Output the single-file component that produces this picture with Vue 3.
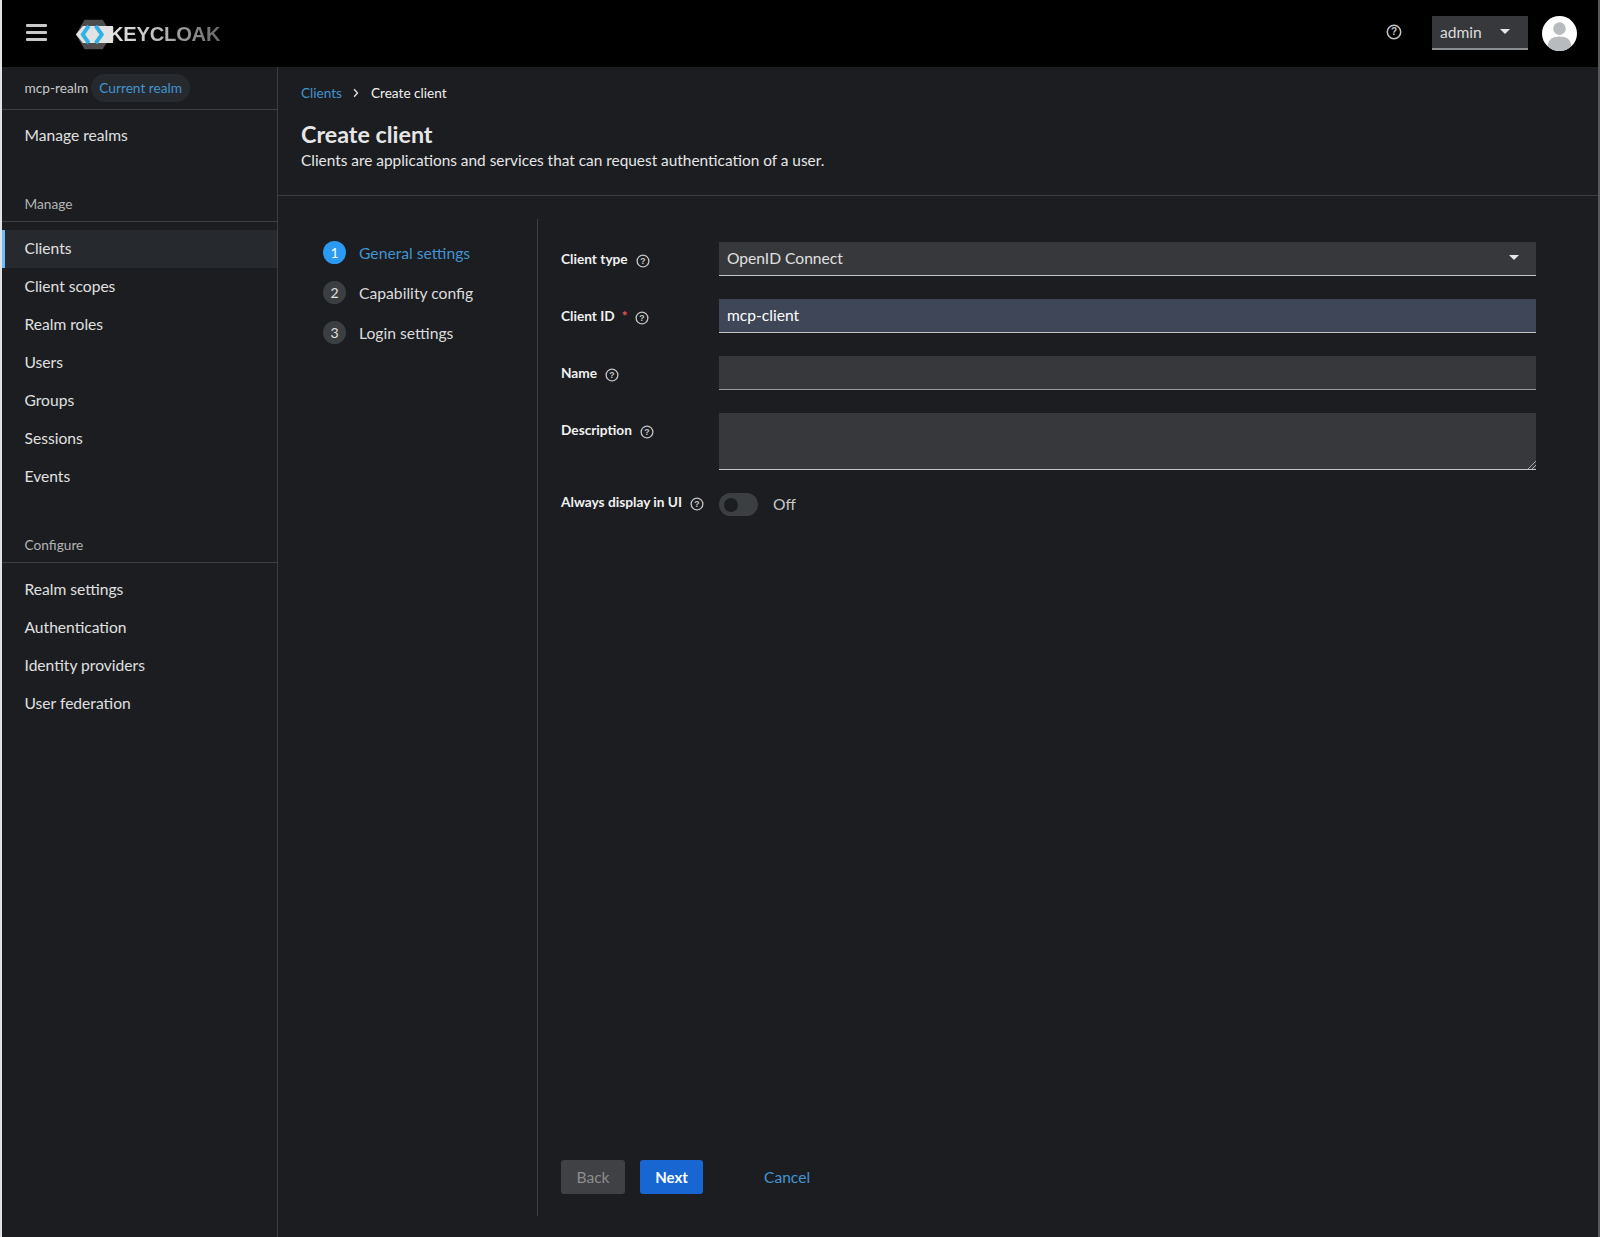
<script setup>
const manage = ['Clients', 'Client scopes', 'Realm roles', 'Users', 'Groups', 'Sessions', 'Events']
const configure = ['Realm settings', 'Authentication', 'Identity providers', 'User federation']
const steps = ['General settings', 'Capability config', 'Login settings']
</script>

<template>
  <div class="page">
    <header class="top">
      <div class="burger"><i></i><i></i><i></i></div>
      <div class="logo">
        <svg class="mark" viewBox="0 0 44 36" width="38" height="31">
          <path d="M11 1H32L43 18L32 35H11L1 18Z" fill="#4d4d4d" />
          <path d="M9 8H44V28H9L1 18Z" fill="#e2e2e2" />
          <path d="M16 8L9 18L16 28" fill="none" stroke="#2bb3e8" stroke-width="4.5" />
          <path d="M24 8L31 18L24 28" fill="none" stroke="#2bb3e8" stroke-width="4.5" />
        </svg>
        <span class="word">KEYCLOAK</span>
      </div>
      <div class="top-right">
        <svg class="help top-help" viewBox="0 0 16 16"><circle cx="8" cy="8" r="6.7" /><text x="8" y="11.4">?</text></svg>
        <div class="user"><span>admin</span><b class="caret"></b></div>
        <svg class="avatar" viewBox="0 0 36 36">
          <circle cx="18" cy="18" r="18" fill="#fff" />
          <circle cx="18" cy="13" r="6.5" fill="#b8bbbe" />
          <path d="M6 31C6 24 11 21 18 21C25 21 30 24 30 31C27 34 23 36 18 36C13 36 9 34 6 31Z" fill="#b8bbbe" />
        </svg>
      </div>
    </header>

    <div class="body">
      <aside class="side">
        <div class="realm"><span>mcp-realm</span><em>Current realm</em></div>
        <a class="nav first">Manage realms</a>
        <div class="section">Manage</div>
        <a v-for="(m, i) in manage" :key="m" class="nav" :class="{ active: i === 0 }">{{ m }}</a>
        <div class="section second">Configure</div>
        <a v-for="c in configure" :key="c" class="nav">{{ c }}</a>
      </aside>

      <main class="main">
        <section class="head">
          <div class="crumbs">
            <a>Clients</a>
            <svg viewBox="0 0 8 12" width="6" height="10"><path d="M1.5 1L6 6L1.5 11" fill="none" stroke="#e0e0e0" stroke-width="1.8" /></svg>
            <span>Create client</span>
          </div>
          <h1>Create client</h1>
          <p>Clients are applications and services that can request authentication of a user.</p>
        </section>

        <section class="wizard">
          <nav class="steps">
            <div v-for="(s, i) in steps" :key="s" class="step" :class="{ on: i === 0 }">
              <span class="num">{{ i + 1 }}</span><span>{{ s }}</span>
            </div>
          </nav>
          <div class="content">
            <form class="form">
              <label class="lab">Client type<svg class="help" viewBox="0 0 16 16"><circle cx="8" cy="8" r="6.7" /><text x="8" y="11.4">?</text></svg></label>
              <div class="field select">OpenID Connect<b class="caret"></b></div>

              <label class="lab">Client ID<span class="req">*</span><svg class="help" viewBox="0 0 16 16"><circle cx="8" cy="8" r="6.7" /><text x="8" y="11.4">?</text></svg></label>
              <div class="field filled">mcp-client</div>

              <label class="lab">Name<svg class="help" viewBox="0 0 16 16"><circle cx="8" cy="8" r="6.7" /><text x="8" y="11.4">?</text></svg></label>
              <div class="field dim"></div>

              <label class="lab">Description<svg class="help" viewBox="0 0 16 16"><circle cx="8" cy="8" r="6.7" /><text x="8" y="11.4">?</text></svg></label>
              <div class="field area">
                <svg class="grip" viewBox="0 0 8 8" width="8" height="8"><path d="M0 8L8 0M4 8L8 4" stroke="#a8a8a8" stroke-width="1" /></svg>
              </div>

              <label class="lab last">Always display in UI<svg class="help" viewBox="0 0 16 16"><circle cx="8" cy="8" r="6.7" /><text x="8" y="11.4">?</text></svg></label>
              <div class="switch"><span class="track"><i></i></span><span class="off">Off</span></div>
            </form>
            <div class="actions">
              <button type="button" class="btn back">Back</button>
              <button type="button" class="btn next">Next</button>
              <a class="cancel">Cancel</a>
            </div>
          </div>
        </section>
      </main>
    </div>
  </div>
</template>

<style>
html, body { margin: 0; background: #1b1d21; }
</style>

<style scoped>
.page {
  width: 1600px;
  height: 1237px;
  box-sizing: border-box;
  border-left: 2px solid #dfe3e6;
  border-right: 2px solid #55585c;
  display: flex;
  flex-direction: column;
  overflow: hidden;
  background: #1b1d21;
  color: #e0e0e0;
  font-family: "Lato", "Noto Sans", sans-serif;
  font-size: 15.6px;
}
.top {
  height: 67px;
  flex: none;
  background: #000;
  display: flex;
  align-items: center;
  padding: 0 21px 2px 24px;
  box-sizing: border-box;
}
.burger { display: flex; flex-direction: column; gap: 4px; width: 21px; margin-top: -1px; }
.burger i { height: 3px; background: #c9c9c9; border-radius: 1px; }
.logo { display: flex; align-items: center; margin: 4px 0 0 28px; }
.mark { display: block; }
.word {
  font-family: "Liberation Sans", sans-serif;
  font-weight: 700;
  font-size: 20.2px;
  margin-left: -4px;
  letter-spacing: -0.25px;
  background: linear-gradient(90deg, #e6e6e6 0%, #c2c2c2 40%, #666 100%);
  background-clip: text;
  -webkit-background-clip: text;
  color: transparent;
}
.top-right { margin-left: auto; display: flex; align-items: center; }
.help { width: 14px; height: 14px; flex: none; margin-top: 4px; }
.help circle { fill: none; stroke: #c4c4c4; stroke-width: 1.5; }
.help text { fill: #c4c4c4; font: 700 10px "Liberation Sans", sans-serif; text-anchor: middle; }
.top-help { width: 16px; height: 16px; margin: -2px 30px 0 0; }
.user {
  width: 96px;
  height: 34px;
  box-sizing: border-box;
  background: #36383c;
  border-bottom: 1px solid #8a8d90;
  display: flex;
  align-items: center;
  padding: 0 18px 1px 8px;
  justify-content: space-between;
  color: #dcdcdc;
  box-shadow: inset 0 -1px 0 #8a8d90;
}
.caret {
  width: 0;
  height: 0;
  border-left: 5px solid transparent;
  border-right: 5px solid transparent;
  border-top: 5px solid #e6e6e6;
}
.avatar { width: 35px; height: 35px; margin: 1px 0 0 14px; }

.body { flex: 1; display: flex; min-height: 0; }
.side {
  width: 276px;
  flex: none;
  box-sizing: border-box;
  background: #1b1d21;
  border-right: 1px solid #3c3f42;
}
.realm {
  height: 43px;
  box-sizing: border-box;
  border-bottom: 1px solid #3c3f42;
  display: flex;
  align-items: center;
  padding: 0 0 1px 22.5px;
  gap: 3px;
  font-size: 13.7px;
  color: #c8c8c8;
}
.realm em {
  font-style: normal;
  color: #4394d0;
  background: #26292d;
  border-radius: 14px;
  padding: 4px 8px;
  line-height: 20px;
}
.nav {
  display: flex;
  align-items: center;
  height: 38px;
  box-sizing: border-box;
  padding: 0 0 2px 22.5px;
  color: #e0e0e0;
}
.nav.first { margin-top: 7px; }
.nav.active {
  background: #26292d;
  box-shadow: inset 3px 0 0 #73bcf7;
  margin-top: 8px;
}
.section {
  margin-top: 36px;
  height: 31px;
  box-sizing: border-box;
  border-bottom: 1px solid #3c3f42;
  padding-left: 22.5px;
  font-size: 13.7px;
  color: #b4b4b4;
  line-height: 25px;
}
.section.second { margin-top: 36px; margin-bottom: 8px; }

.main { flex: 1; min-width: 0; display: flex; flex-direction: column; }
.head {
  height: 129px;
  flex: none;
  box-sizing: border-box;
  border-bottom: 1px solid #3c3f42;
  padding: 15px 0 0 23px;
}
.crumbs { display: flex; align-items: center; gap: 11.5px; font-size: 13.6px; height: 22px; color: #f0f0f0; }
.crumbs a { color: #4394d0; }
h1 { margin: 15px 0 0; font-size: 23.3px; font-weight: 700; line-height: 31px; color: #e6e6e6; }
p { margin: 0; font-size: 15.4px; line-height: 20px; color: #e6e6e6; }

.wizard { flex: 1; display: flex; min-height: 0; padding: 23px 0 21px; }
.steps {
  width: 259px;
  flex: none;
  box-sizing: border-box;
  border-right: 1px solid #3c3f42;
  margin-left: 1px;
  padding: 22px 0 0 44px;
  display: flex;
  flex-direction: column;
  gap: 17px;
  font-size: 15.7px;
}
.step { display: flex; align-items: center; gap: 13px; height: 23px; color: #dcdcdc; }
.step.on { color: #4394d0; }
.num {
  width: 23px;
  height: 23px;
  border-radius: 50%;
  background: #3c3f42;
  display: flex;
  align-items: center;
  justify-content: center;
  font-size: 14px;
  color: #e0e0e0;
}
.step.on .num { background: #2b9af3; color: #fff; }

.content { flex: 1; display: flex; flex-direction: column; justify-content: space-between; padding: 23px 62px 22px 23px; min-width: 0; }
.form {
  display: grid;
  grid-template-columns: 158px 1fr;
  row-gap: 23px;
}
.lab {
  display: flex;
  align-items: flex-start;
  gap: 8px;
  font-weight: 700;
  font-size: 13.7px;
  line-height: 20px;
  padding-top: 7px;
  color: #f0f0f0;
}
.lab.last { padding-top: 0; margin-top: -1px; }
.lab .help { margin-top: 5px; }
.req { color: #f0544c; margin-left: -1px; margin-right: -1px; }
.field {
  height: 34px;
  box-sizing: border-box;
  background: #36383c;
  border-bottom: 1px solid #c4c4c4;
  padding: 0 8px 2px;
  display: flex;
  align-items: center;
  color: #e0e0e0;
  position: relative;
}
.select { justify-content: space-between; padding-right: 17px; }
.filled { background: #3f4658; color: #fff; }
.dim { border-bottom-color: #9a9a9a; }
.area { height: 57px; }
.grip { position: absolute; right: 0; bottom: 0; }
.switch { display: flex; align-items: center; gap: 15px; height: 23px; color: #c8c8c8; }
.off { margin-top: -2px; }
.track {
  width: 39px;
  height: 23px;
  border-radius: 12px;
  background: #3c3f42;
  display: flex;
  align-items: center;
  padding-left: 5px;
  box-sizing: border-box;
}
.track i { width: 14px; height: 14px; border-radius: 50%; background: #1b1d21; }
.actions { display: flex; align-items: center; height: 34px; }
.btn {
  height: 34px;
  border: 0;
  border-radius: 3px;
  font: inherit;
  padding: 0 0 1px;
}
.back { width: 64px; background: #3f4144; color: #8d8d8d; }
.next { width: 63px; margin-left: 15px; background: #1866d2; color: #fff; font-weight: 700; font-size: 15px; }
.cancel { margin: -1px 0 0 61px; color: #4394d0; }
</style>
